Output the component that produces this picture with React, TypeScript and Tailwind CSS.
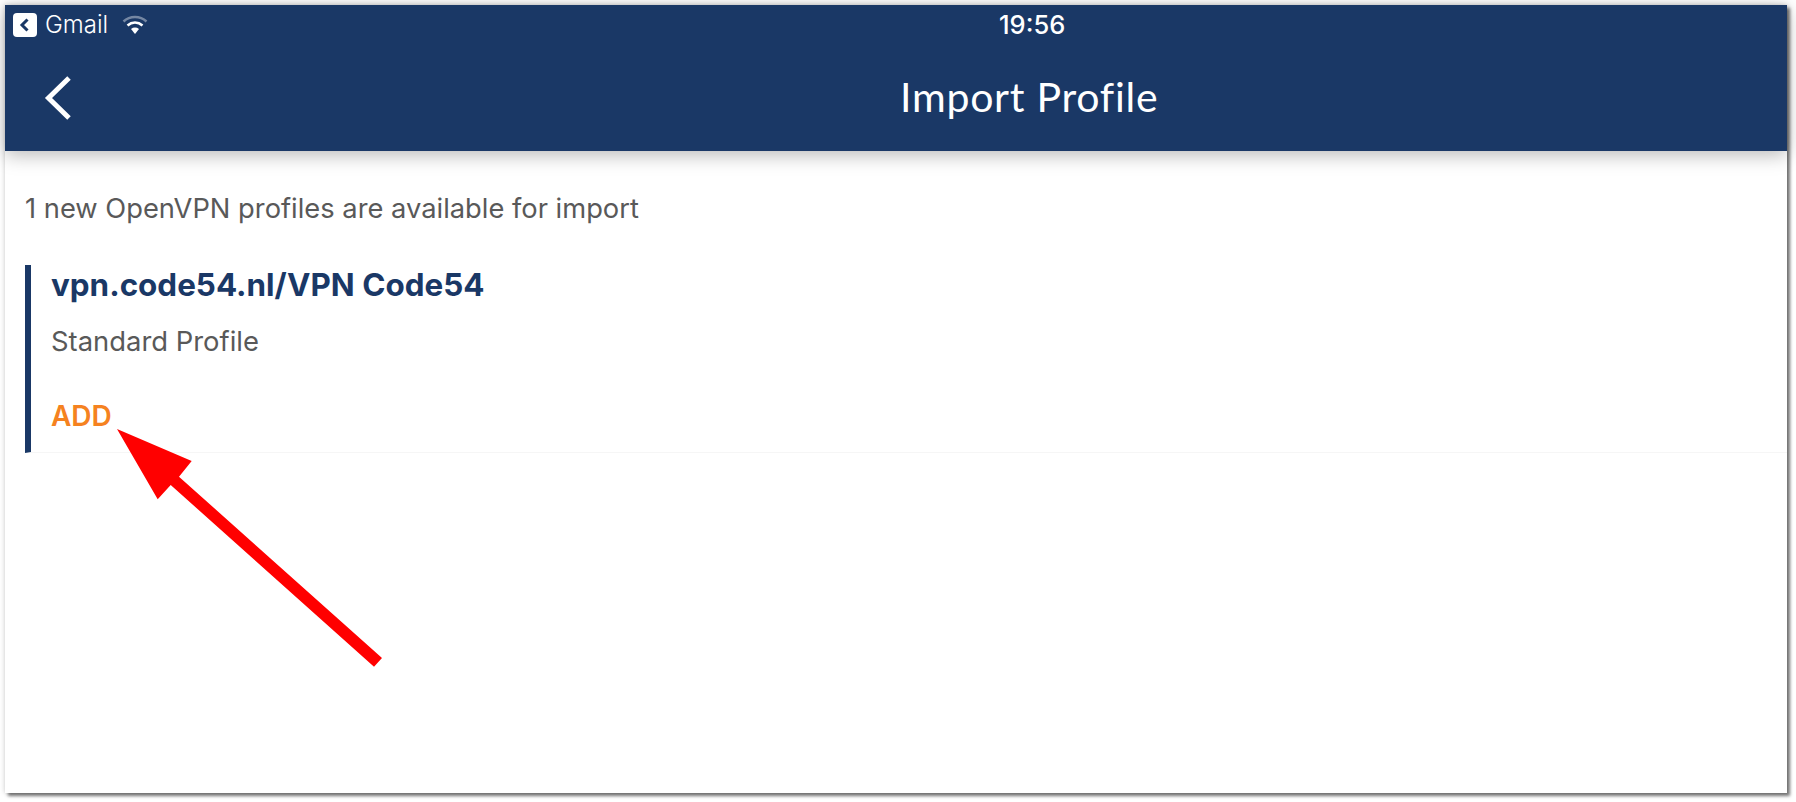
const App = () => {
  return (
    <div className="relative h-[802px] w-[1796px] overflow-hidden bg-white pl-[5px] pt-[5px] font-['Inter',sans-serif]">
      <div className="flex h-[788px] w-[1782px] flex-col bg-white shadow-[0_0_5px_rgba(0,0,0,0.22),3px_3px_3px_rgba(0,0,0,0.5)]">
        <header className="h-[146px] shrink-0 bg-[#1a3866] text-white shadow-[0_4px_18px_rgba(0,0,0,0.28)]">
          <div className="flex h-[34px] items-end">
            <div className="flex w-[994px] items-center pl-2">
              <svg width="24" height="24" viewBox="0 0 24 24">
                <rect width="24" height="24" rx="4" fill="#fff" />
                <path d="M14.5 6.5 9 12l5.5 5.5" fill="none" stroke="#1a3866" strokeWidth="3" />
              </svg>
              <span className="ml-[8px] text-[24px] leading-[28px] font-light">Gmail</span>
              <svg className="ml-[14px]" width="26" height="20" viewBox="0 0 26 20">
                <path d="M1.5 6.5C8 .6 18 .6 24.5 6.5" fill="none" stroke="#fff" strokeOpacity="0.4" strokeWidth="2.5" />
                <path d="M5.5 10.5C10 6.6 16 6.6 20.5 10.5" fill="none" stroke="#fff" strokeWidth="2.5" />
                <path d="M9 14c2.500-1.900 5.500-1.900 8 0l-4 5z" fill="#fff" />
              </svg>
            </div>
            <span className="text-[25.500px] leading-[28px] font-medium">19:56</span>
          </div>
          <div className="flex h-[112px] items-center">
            <div className="flex w-[895px] items-center pl-[38px] pt-[5px]">
              <svg width="30" height="46" viewBox="0 0 30 46">
                <path d="M26 3 5.500 23 26 43" fill="none" stroke="#fff" strokeWidth="5" />
              </svg>
            </div>
            <h1 className="mt-[3px] font-['Lato',sans-serif] text-[41px] leading-none font-normal tracking-[0.75px]">Import Profile</h1>
          </div>
        </header>
        <main className="flex flex-col pl-[20px] pt-[43px]">
          <p className="text-[27.300px] leading-[30px] text-[#595959]">1 new OpenVPN profiles are available for import</p>
          <section className="mt-[41px] flex h-[188px] flex-col border-b border-[#f6f6f6] border-l-[6px] border-l-[#1a3866] pl-[20px] pt-[3px]">
            <h2 className="text-[31.400px] leading-[34px] font-bold text-[#1a3866]">vpn.code54.nl/VPN Code54</h2>
            <p className="mt-[24px] text-[27.400px] leading-[30px] text-[#595959]">Standard Profile</p>
            <button className="mt-[45px] self-start text-[28px] leading-[30px] font-semibold text-[#f58220]">ADD</button>
          </section>
        </main>
      </div>
      <svg className="absolute left-0 top-0" width="400" height="680" viewBox="0 0 400 680">
        <polygon points="117,429 191.700,461 179,476.700 382,658 374,666.700 170.700,485 157.700,499.300" fill="#ff0000" />
      </svg>
    </div>
  );
};

export default App;
